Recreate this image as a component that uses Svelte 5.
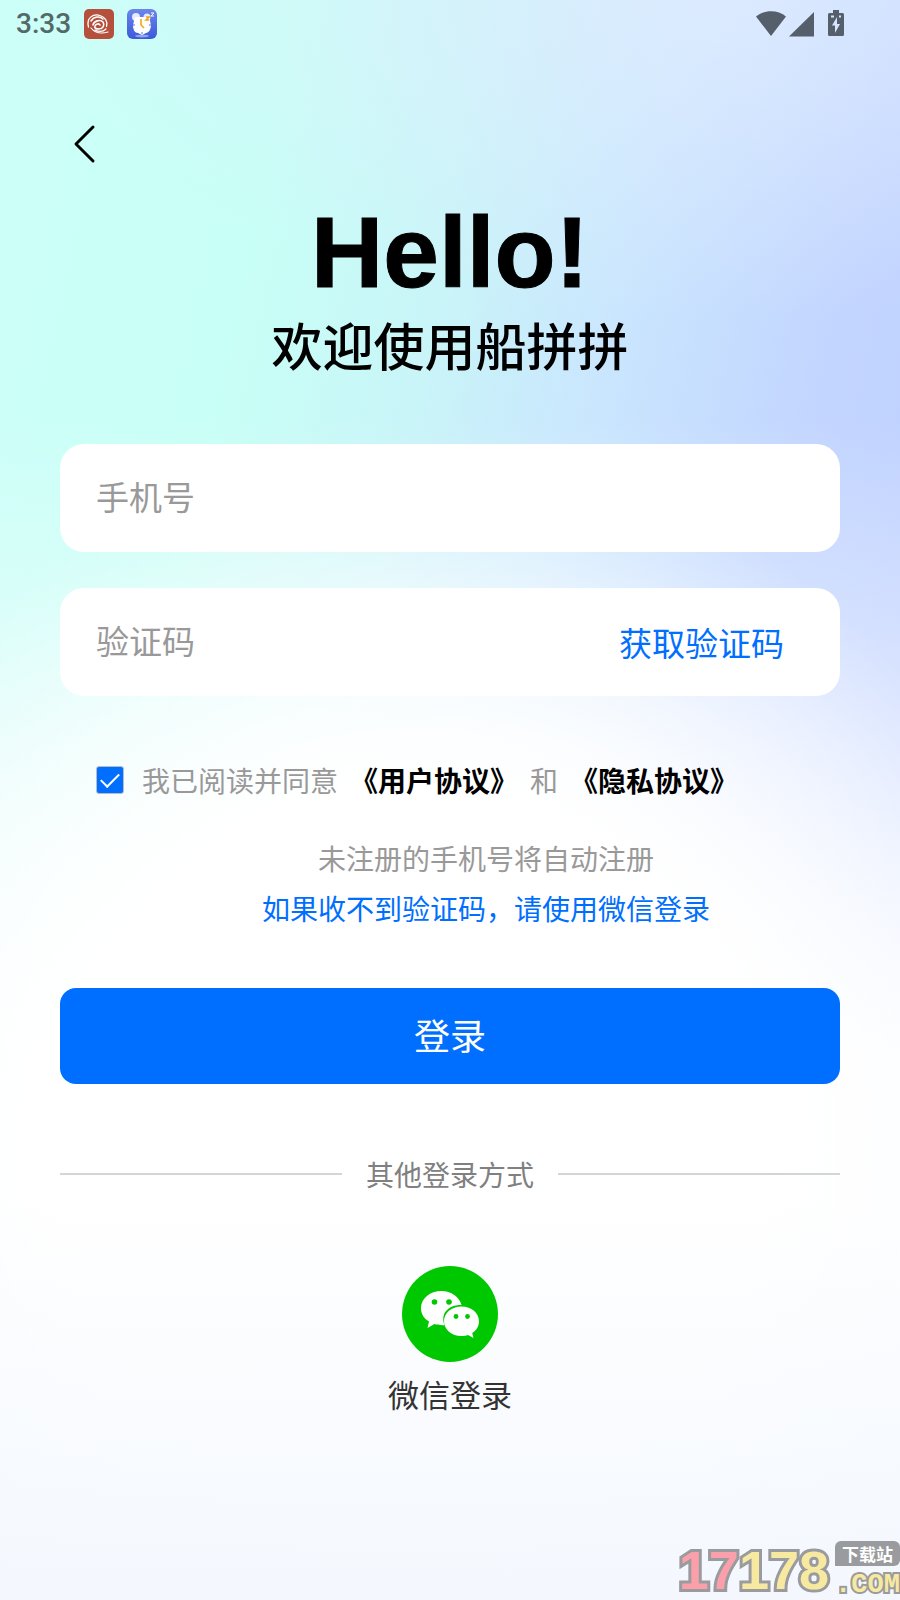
<script lang="ts">
  let phone = $state('')
  let code = $state('')
  let agreed = $state(true)

  function handleSubmit(e: SubmitEvent) {
    e.preventDefault()
  }
</script>

<div class="page">
  <header class="status-bar">
    <div class="status-group">
      <span class="time">3:33</span>
      <svg class="app-icon" viewBox="0 0 30 30" aria-hidden="true">
        <rect width="30" height="30" rx="5" fill="#b5503c" />
        <g fill="none" stroke="#fff" stroke-linecap="round">
          <path d="M4.500 18C2 9 9 4.500 16 6.500c5 1.500 8 6 6.500 11" stroke-width="1.3" />
          <path d="M7 12c3-5 9-5 12-2" stroke-width="1.6" />
          <path d="M9 16c1-4 7-6 10-3 2 3 0 7-4 7-3 0-5-1-4-3 1-2 4-3 5-1" stroke-width="1.6" />
          <path d="M7 19c4 5 10 6 17 4M11 21c4 2 8 2 11-1" stroke-width="1.2" />
        </g>
      </svg>
      <svg class="app-icon" viewBox="0 0 30 30" aria-hidden="true">
        <defs>
          <linearGradient id="clock-bg" x1="0" y1="0" x2="0" y2="1">
            <stop offset="0" stop-color="#6c86ec" />
            <stop offset="1" stop-color="#3c59d8" />
          </linearGradient>
        </defs>
        <rect width="30" height="30" rx="6" fill="url(#clock-bg)" />
        <ellipse cx="15" cy="27" rx="7" ry="1.500" fill="#8ea5f4" />
        <circle cx="9" cy="8" r="4" fill="#e4eaff" />
        <circle cx="20" cy="8" r="3.500" fill="#e4eaff" />
        <path d="M8 8h14l2 8c0 5-3 8-5 8l-4 2-4-2c-3 0-5-3-5-8z" fill="#fff" />
        <path d="M14 10v6l3 3M19 8h3l-3 3h3" fill="none" stroke="#f0a818" stroke-width="1.6" />
        <path d="M24 4h3l-3 3h3" fill="none" stroke="#fff" />
        <path d="M6 16h2M22 16h2M15 23v2" stroke="#5370e2" />
      </svg>
    </div>
    <svg class="system-icons" viewBox="0 0 88 28" aria-hidden="true">
      <path d="M0 6.500C8-.5 22-.5 30 6.500L15 26z" />
      <path d="M33 26.500 58 2v24.500z" />
      <path fill-rule="evenodd" d="M77 0h6v3h3.500q1.500 0 1.500 1.500v20q0 1.500-1.500 1.500h-13Q72 26 72 24.500v-20Q72 3 73.500 3H77zM81 7l-5 8.500h3V23l5-9h-3zM75 5.500v2h3v-2zM83 5.500v2h2v-2z" />
    </svg>
  </header>

  <main class="content">
    <button class="back" type="button" aria-label="返回">
      <svg viewBox="0 0 48 48" aria-hidden="true">
        <path d="M33 7 16 24l17 17" />
      </svg>
    </button>

    <h1>Hello!</h1>
    <p class="welcome">欢迎使用船拼拼</p>

    <form onsubmit={handleSubmit}>
      <div class="field">
        <input type="tel" placeholder="手机号" aria-label="手机号" bind:value={phone} />
      </div>
      <div class="field">
        <input type="text" placeholder="验证码" aria-label="验证码" bind:value={code} />
        <button class="get-code" type="button">获取验证码</button>
      </div>

      <div class="agreement">
        <input id="agree" type="checkbox" bind:checked={agreed} />
        <label for="agree">我已阅读并同意</label>
        <a href="#terms">《用户协议》</a>
        <span>和</span>
        <a href="#privacy">《隐私协议》</a>
      </div>

      <div class="hints">
        <p>未注册的手机号将自动注册</p>
        <a href="#wechat">如果收不到验证码，请使用微信登录</a>
      </div>

      <button class="login" type="submit">登录</button>
    </form>

    <div class="divider"><span>其他登录方式</span></div>

    <button class="wechat" type="button">
      <svg viewBox="0 0 96 96" aria-hidden="true">
        <circle cx="48" cy="48" r="48" fill="#00c800" />
        <path d="M39.500 25C28 25 19 32.500 19 42c0 6 3 10.500 8 13.500L25.500 62l7-4c2.500.8 5 1.200 8 1.200h2C38 47 47 38.500 59.500 39 57.500 31 49 25 39.500 25z" fill="#fff" />
        <path d="M59.500 40.500C49.500 40.500 42 47 42 55.200S49.500 70 59.500 70c2.500 0 4.500-.4 6.500-1l5.500 3-1.300-5C74.500 64.500 77 60 77 55.200c0-8.200-7.500-14.700-17.500-14.700z" fill="#fff" />
        <g fill="#00c800">
          <circle cx="32.500" cy="36" r="2.800" />
          <circle cx="47" cy="36" r="2.800" />
          <circle cx="54" cy="50.500" r="2.400" />
          <circle cx="65.500" cy="50.500" r="2.400" />
        </g>
      </svg>
      <span>微信登录</span>
    </button>
  </main>

  <div class="watermark">
    <span class="digits"><span class="pink">17</span>178</span>
    <span class="site">
      <span class="tag">下载站</span>
      <span class="com">.COM</span>
    </span>
  </div>
</div>

<style>
  :global(body) {
    margin: 0;
  }

  .page {
    position: relative;
    box-sizing: border-box;
    min-height: 100vh;
    font-family: 'Noto Sans CJK SC', sans-serif;
    background:
      linear-gradient(to bottom, rgba(244, 248, 254, 0) 75%, #f4f8fe 100%),
      radial-gradient(ellipse 75% 44% at 46% 72%, #fff 0%, #fff 52%, rgba(255, 255, 255, 0.85) 62%, rgba(255, 255, 255, 0.15) 92%, rgba(255, 255, 255, 0) 100%),
      linear-gradient(to bottom, rgba(250, 252, 255, 0) 26%, rgba(250, 252, 255, 0.5) 45%, #fafcff 66%),
      radial-gradient(ellipse 75% 20% at 80% 0%, rgba(226, 237, 255, 0.75) 0%, rgba(226, 237, 255, 0) 100%),
      linear-gradient(102deg, #ccfff8 0%, #c8fff6 24%, #c9f5f8 40%, #cae6fe 55%, #c3d6ff 72%, #bccdff 90%);
  }

  button {
    padding: 0;
    border: 0;
    background: none;
    font-family: inherit;
    cursor: pointer;
  }

  h1,
  p {
    margin: 0;
  }

  a {
    text-decoration: none;
  }

  .status-bar {
    display: flex;
    align-items: center;
    justify-content: space-between;
    height: 48px;
    padding: 0 56px 0 16px;
  }

  .status-group {
    display: flex;
    align-items: center;
    gap: 13px;
  }

  .time {
    font: 500 28px/48px Roboto, sans-serif;
    color: #536967;
  }

  .app-icon {
    width: 30px;
    height: 30px;
  }

  .system-icons {
    width: 88px;
    height: 28px;
    fill: #555e6b;
  }

  .content {
    display: flex;
    flex-direction: column;
    padding: 72px 60px 96px;
  }

  .back {
    align-self: flex-start;
    width: 48px;
    height: 48px;
  }

  .back svg {
    display: block;
    fill: none;
    stroke: #000;
    stroke-width: 3;
    stroke-linecap: round;
    stroke-linejoin: round;
  }

  h1 {
    margin-top: 36px;
    font-family: 'Liberation Sans', sans-serif;
    font-size: 100px;
    font-weight: 700;
    line-height: 96px;
    text-align: center;
    -webkit-text-stroke: 1px #000;
  }

  .welcome {
    margin-top: 16px;
    font-size: 51px;
    font-weight: 500;
    line-height: 56px;
    text-align: center;
  }

  form {
    display: flex;
    flex-direction: column;
    gap: 36px;
    margin-top: 72px;
  }

  .field {
    display: flex;
    align-items: center;
    height: 108px;
    padding: 0 56px 0 36px;
    border-radius: 24px;
    box-sizing: border-box;
    background: #fff;
  }

  .field input {
    flex: 1;
    min-width: 0;
    height: 60px;
    padding: 0 0 4px;
    border: 0;
    outline: none;
    background: none;
    font-family: inherit;
    font-size: 33px;
    color: #333;
  }

  .field input::placeholder {
    color: #999;
    opacity: 1;
  }

  .get-code {
    font-size: 33px;
    line-height: 48px;
    color: #006fff;
  }

  .agreement {
    display: flex;
    align-items: center;
    gap: 12px;
    margin-top: 34px;
    padding-left: 36px;
    font-size: 28px;
    line-height: 28px;
    color: #999;
    white-space: nowrap;
  }

  .agreement input {
    appearance: none;
    width: 28px;
    height: 28px;
    margin: 0 6px 0 0;
    border: 1px solid #b8bcc4;
    border-radius: 3px;
    background: #fff;
  }

  .agreement input:checked {
    background: #006fff;
  }

  .agreement input:checked::before {
    content: '';
    display: block;
    box-sizing: border-box;
    width: 18px;
    height: 10px;
    margin: 6px 4px;
    border: solid #fff;
    border-width: 0 0 2px 2px;
    transform: rotate(-45deg);
  }

  .agreement a {
    font-weight: 700;
    color: #000;
  }

  .hints {
    display: flex;
    flex-direction: column;
    align-items: center;
    margin-top: 3px;
    padding-left: 72px;
    font-size: 28px;
    line-height: 50px;
    color: #999;
  }

  .hints a {
    color: #006fff;
  }

  .login {
    height: 96px;
    margin-top: 19px;
    padding-bottom: 4px;
    border-radius: 16px;
    background: #006fff;
    font-size: 36px;
    color: #fff;
  }

  .divider {
    display: flex;
    align-items: center;
    gap: 24px;
    margin-top: 70px;
    font-size: 28px;
    line-height: 40px;
    color: #808080;
  }

  .divider::before,
  .divider::after {
    content: '';
    flex: 1;
    height: 2px;
    background: #d4d5d8;
  }

  .wechat {
    display: flex;
    flex-direction: column;
    align-items: center;
    align-self: center;
    gap: 8px;
    margin-top: 72px;
    font-size: 31px;
    line-height: 48px;
    color: #333;
  }

  .wechat svg {
    width: 96px;
    height: 96px;
  }

  .watermark {
    display: flex;
    align-items: center;
    gap: 6px;
    position: absolute;
    right: 0;
    bottom: 0;
  }

  .digits {
    font: 700 54px/60px 'Liberation Sans', sans-serif;
    color: #f8e9a0;
    -webkit-text-stroke: 6px #999b9e;
    paint-order: stroke fill;
  }

  .pink {
    color: #fba0aa;
  }

  .site {
    display: flex;
    flex-direction: column;
    align-items: center;
    gap: 4px;
  }

  .tag {
    padding: 0 7px;
    border-radius: 6px 6px 6px 0;
    background: #999b9e;
    font-size: 17px;
    font-weight: 700;
    line-height: 25px;
    color: #fff;
  }

  .com {
    font: 700 27px/30px 'Liberation Mono', monospace;
    color: #f8e9a0;
    -webkit-text-stroke: 4px #999b9e;
    paint-order: stroke fill;
  }
</style>
